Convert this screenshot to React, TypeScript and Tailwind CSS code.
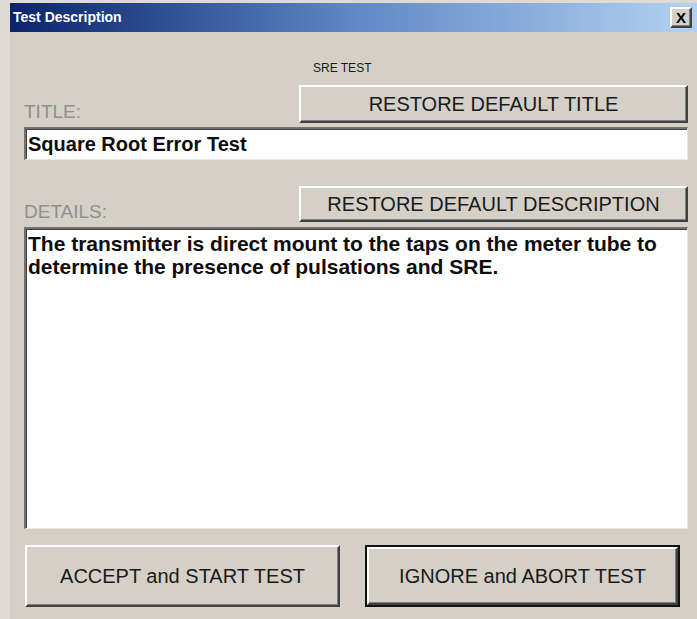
import React from 'react';

// classic raised / sunken bevels
const raised =
  'border-t-2 border-l-2 border-b-2 border-r-2 border-t-white border-l-white border-b-[#404040] border-r-[#404040] shadow-[inset_-1px_-1px_0_#808080]';
const sunken =
  'border-t-2 border-l-2 border-b border-r border-t-[#707070] border-l-[#707070] border-b-[#e8e6e0] border-r-[#e8e6e0] shadow-[inset_1px_1px_0_#404040]';

const font = { fontFamily: '"Liberation Sans", Arial, sans-serif' };

function Button({ children, className = '' }: { children: React.ReactNode; className?: string }) {
  return (
    <button className={`bg-[#d4d0c8] text-[#1a1a1a] flex items-center justify-center ${raised} ${className}`}>
      {children}
    </button>
  );
}

export default function App() {
  return (
    <div className="w-[697px] h-[619px] bg-[#dedbd4] pl-[10px] pt-[3px] flex flex-col overflow-hidden" style={font}>
      {/* title bar */}
      <div className="h-[29px] flex items-center justify-between pl-[3px] pr-[5px] bg-gradient-to-r from-[#0c236b] via-[#6088c4] to-[#b4d2f2]">
        <span className="text-white font-bold text-[14px]">Test Description</span>
        <div className={`w-[22px] h-[21px] bg-[#d4d0c8] flex items-center justify-center text-black font-bold text-[15px] leading-none ${raised}`}>
          X
        </div>
      </div>

      {/* dialog body */}
      <div className="flex-1 bg-[#d4d0c8] pl-[14px] pr-[9px] flex flex-col">
        <div className="flex">
          <div className="w-[275px]" />
          <div className="pl-[14px] pt-[29px] text-[12px] leading-[14px] text-[#1a1a1a]">SRE TEST</div>
        </div>

        <div className="flex items-end mt-[10px]">
          <div className="w-[275px] text-[19px] leading-none text-[#8f8f8f] pb-[2px]">TITLE:</div>
          <Button className="flex-1 h-[38px] text-[20px]">RESTORE DEFAULT TITLE</Button>
        </div>

        <div className={`mt-[4px] h-[33px] bg-white flex items-center pl-[2px] ${sunken}`}>
          <span className="text-[20px] font-bold text-[#0d0d0d] leading-none">Square Root Error Test</span>
        </div>

        <div className="flex items-end mt-[26px]">
          <div className="w-[275px] text-[19px] leading-none text-[#8f8f8f] pb-[1px]">DETAILS:</div>
          <Button className="flex-1 h-[36px] text-[20px]">RESTORE DEFAULT DESCRIPTION</Button>
        </div>

        <div className={`mt-[5px] h-[302px] bg-white pl-[2px] pt-[3px] ${sunken}`}>
          <p className="text-[21px] font-bold text-[#0d0d0d] leading-[23px] whitespace-nowrap">
            The transmitter is direct mount to the taps on the meter tube to
            <br />
            determine the presence of pulsations and SRE.
          </p>
        </div>

        <div className="flex gap-[25px] mt-[16px] pl-[1px]">
          <Button className="w-[315px] h-[62px] text-[20px]">ACCEPT and START TEST</Button>
          <div className="border-2 border-[#111]">
            <Button className="w-[311px] h-[58px] text-[20px]">IGNORE and ABORT TEST</Button>
          </div>
        </div>
      </div>
    </div>
  );
}
